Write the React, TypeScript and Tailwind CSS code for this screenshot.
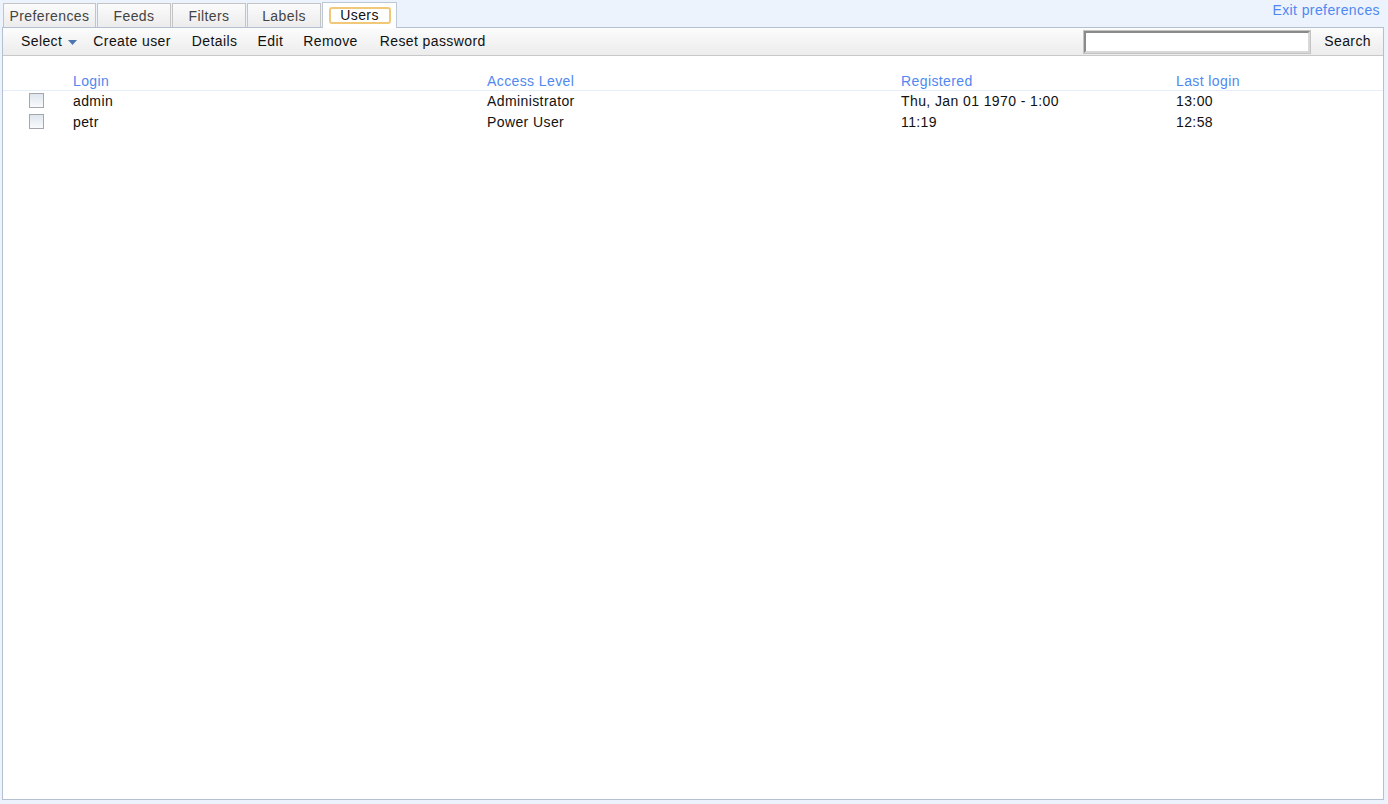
import React from "react";

const tabs = ["Preferences", "Feeds", "Filters", "Labels", "Users"];
const tabWidths: Record<string, string> = {
  Preferences: "w-[93px]",
  Feeds: "w-[74px]",
  Filters: "w-[74px]",
  Labels: "w-[74px]",
  Users: "w-[75px]",
};

const users = [
  { login: "admin", level: "Administrator", registered: "Thu, Jan 01 1970 - 1:00", last: "13:00" },
  { login: "petr", level: "Power User", registered: "11:19", last: "12:58" },
];

function Checkbox() {
  return (
    <span className="block w-[15px] h-[15px] border border-[#a4a8ae] bg-gradient-to-b from-[#dfe6ee] to-[#f8fafc]" />
  );
}

export default function App() {
  return (
    <div className="w-full h-[804px] bg-[#ecf3fd] flex flex-col pl-[2px] pr-[4px] pb-[4px] font-['Liberation_Sans',Arial,sans-serif] text-[14px] tracking-[0.4px] text-[#111]">
      {/* tabs row */}
      <div className="relative flex items-end h-[27px] pl-[1px] gap-[1px]">
        {tabs.map((t) => {
          const active = t === "Users";
          return (
            <div
              key={t}
              className={`${tabWidths[t]} h-[24px] flex items-center justify-center border border-b-0 ${
                active
                  ? "bg-white border-[#bcc8d8] h-[26px] -mb-px relative z-10"
                  : "bg-gradient-to-b from-[#fbfbfb] to-[#ececec] border-[#c4c4c4] text-[#444]"
              }`}
            >
              {active ? (
                <span className="w-[62px] h-[17px] mt-[-1px] flex items-center justify-center border-2 border-[#f1c878] rounded-[3px] leading-none">
                  {t}
                </span>
              ) : (
                <span className="leading-none">{t}</span>
              )}
            </div>
          );
        })}
        <a className="absolute right-[4px] top-[3px] text-[#4f88f0] leading-none">Exit preferences</a>
      </div>

      {/* main panel */}
      <div className="flex-1 flex flex-col bg-white border border-[#b4c0d2]">
        <div className="h-[28px] flex items-center bg-gradient-to-b from-[#fcfcfc] to-[#ececec] border-b border-[#c8c8c8] pl-[18px] pr-[12px]">
          <span className="flex items-center">
            Select
            <svg width="9" height="5" viewBox="0 0 9 5" className="ml-[6px] mt-[1px]">
              <path d="M0 0h9L4.5 5z" fill="#4d76b0" />
            </svg>
          </span>
          <span className="ml-[16px]">Create user</span>
          <span className="ml-[21px]">Details</span>
          <span className="ml-[20px]">Edit</span>
          <span className="ml-[20px]">Remove</span>
          <span className="ml-[22px]">Reset password</span>
          <div className="flex-1" />
          <input
            className="w-[226px] h-[22px] border-2 border-t-[#8a8a8a] border-l-[#8a8a8a] border-r-[#d8d8d8] border-b-[#d8d8d8] bg-white outline-none"
            style={{ boxShadow: "0 0 0 1px #c4c4c4" }}
          />
          <span className="ml-[14px]">Search</span>
        </div>

        <div className="pt-[16px]">
          <table className="w-full border-collapse">
            <thead>
              <tr className="border-b border-[#e6eefb] text-[#4f88f0] h-[18px] leading-none">
                <th className="w-[70px] font-normal" />
                <th className="w-[414px] text-left font-normal align-middle">Login</th>
                <th className="w-[414px] text-left font-normal align-middle">Access Level</th>
                <th className="w-[275px] text-left font-normal align-middle">Registered</th>
                <th className="text-left font-normal align-middle">Last login</th>
              </tr>
            </thead>
            <tbody>
              {users.map((u) => (
                <tr key={u.login} className="h-[21px] leading-none align-middle">
                  <td className="pl-[26px]">
                    <Checkbox />
                  </td>
                  <td>{u.login}</td>
                  <td>{u.level}</td>
                  <td>{u.registered}</td>
                  <td>{u.last}</td>
                </tr>
              ))}
            </tbody>
          </table>
        </div>
      </div>
    </div>
  );
}
